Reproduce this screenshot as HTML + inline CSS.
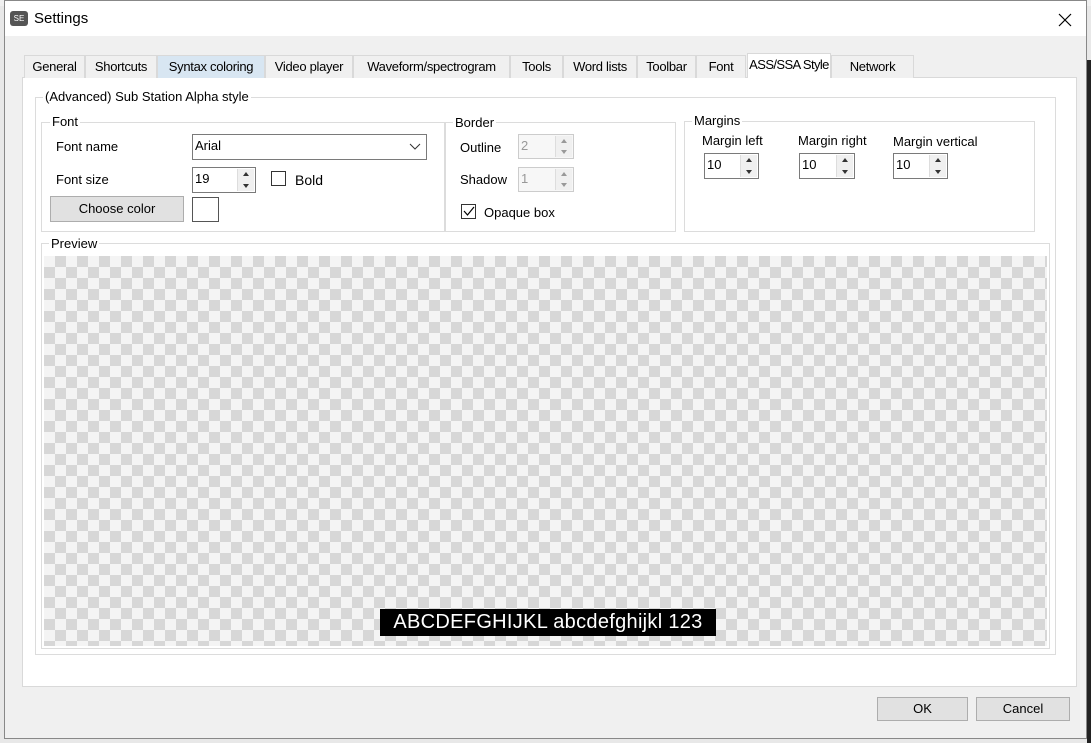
<!DOCTYPE html><html><head><style>
*{box-sizing:border-box;margin:0;padding:0}
body{width:1091px;height:743px;overflow:hidden;background:#e8e8e8;font-family:"Liberation Sans",sans-serif;font-size:13px;color:#000;position:relative}
.a{position:absolute}
.win{left:4px;top:0;width:1083px;height:739px;background:#f0f0f0;border:1px solid #888}
.title{left:5px;top:1px;width:1081px;height:35px;background:#fff}
.tab{position:absolute;top:55px;height:23px;border:1px solid #d9d9d9;border-bottom:none;background:#f0f0f0;padding:3px 0 0 0;text-align:center;font-size:13px;letter-spacing:-0.3px;white-space:nowrap;overflow:visible}
.panel{left:22px;top:77px;width:1055px;height:610px;background:#fff;border:1px solid #d9d9d9}
.gb{position:absolute;border:1px solid #dcdcdc}
.gl{position:absolute;background:#fff;padding:0 2px;font-size:13px}
.inp{position:absolute;border:1px solid #7a7a7a;background:#fff;padding:3px 2px;font-size:13px}
.spin{position:absolute;right:1px;top:1px;width:17px;bottom:1px;border-left:1px solid #ddd;background:#f0f0f0}
.spin:before{content:"";position:absolute;left:5px;top:3px;border:3px solid transparent;border-bottom:4px solid #333;border-top:none}
.spin:after{content:"";position:absolute;left:5px;bottom:3px;border:3px solid transparent;border-top:4px solid #333;border-bottom:none}
.dis{border-color:#ccc;color:#999;background:#f7f7f7}
.dis .spin:before{border-bottom-color:#999}.dis .spin:after{border-top-color:#999}
.btn{position:absolute;border:1px solid #adadad;background:#e1e1e1;text-align:center;font-size:13px}
.chk{position:absolute;border:1px solid #333;width:15px;height:15px;background:#fff}
.checker{left:44px;top:256px;width:1003px;height:390px;background-color:#f4f4f4;background-image:linear-gradient(45deg,#d7d7d7 25%,transparent 25%,transparent 75%,#d7d7d7 75%),linear-gradient(45deg,#d7d7d7 25%,transparent 25%,transparent 75%,#d7d7d7 75%);background-size:22px 22px;background-position:0 0,11px 11px}
</style></head><body>
<div class="a" style="left:0;top:0;width:1091px;height:6px;background:#f0f0f0"></div>
<div class="a" style="left:1087px;top:60px;width:4px;height:683px;background:#222"></div>
<div class="a win"></div>
<div class="a title"></div>
<div class="a" style="left:10px;top:11px;width:18px;height:15px;background:#555;border-radius:3px;color:#fff;font-size:8px;text-align:center;line-height:15px">SE</div>
<div class="a" style="left:34px;top:10px;font-size:15px">Settings</div>
<svg class="a" style="left:1058px;top:13px" width="14" height="14"><path d="M1 1L13 13M13 1L1 13" stroke="#000" stroke-width="1.2"/></svg>

<div class="a panel"></div>
<div class="tab" style="left:24px;width:61px">General</div>
<div class="tab" style="left:85px;width:72px">Shortcuts</div>
<div class="tab" style="left:157px;width:108px;background:#d8e6f2">Syntax coloring</div>
<div class="tab" style="left:265px;width:88px">Video player</div>
<div class="tab" style="left:353px;width:157px">Waveform/spectrogram</div>
<div class="tab" style="left:510px;width:53px">Tools</div>
<div class="tab" style="left:563px;width:74px">Word lists</div>
<div class="tab" style="left:637px;width:59px">Toolbar</div>
<div class="tab" style="left:696px;width:50px">Font</div>
<div class="tab" style="left:747px;top:53px;height:25px;width:84px;background:#fff;border-color:#d9d9d9;letter-spacing:-0.6px">ASS/SSA Style</div>
<div class="tab" style="left:831px;width:83px">Network</div>

<div class="gb" style="left:35px;top:97px;width:1021px;height:558px"></div>
<div class="gl" style="left:43px;top:89px">(Advanced) Sub Station Alpha style</div>

<div class="gb" style="left:41px;top:122px;width:404px;height:110px"></div>
<div class="gl" style="left:50px;top:114px">Font</div>
<div class="a" style="left:56px;top:139px">Font name</div>
<div class="inp" style="left:192px;top:134px;width:235px;height:26px">Arial</div>
<svg class="a" style="left:409px;top:143px" width="12" height="8"><path d="M1 1L6 6L11 1" stroke="#333" fill="none"/></svg>
<div class="a" style="left:56px;top:172px">Font size</div>
<div class="inp" style="left:192px;top:167px;width:64px;height:26px">19<div class="spin"></div></div>
<div class="chk" style="left:271px;top:171px"></div>
<div class="a" style="left:295px;top:172px;font-size:14px">Bold</div>
<div class="btn" style="left:50px;top:196px;width:134px;height:26px;line-height:24px">Choose color</div>
<div class="a" style="left:192px;top:197px;width:27px;height:25px;border:1px solid #555;background:#fff"></div>

<div class="gb" style="left:445px;top:122px;width:231px;height:110px"></div>
<div class="gl" style="left:453px;top:115px">Border</div>
<div class="a" style="left:460px;top:140px">Outline</div>
<div class="inp dis" style="left:518px;top:134px;width:56px;height:25px">2<div class="spin"></div></div>
<div class="a" style="left:460px;top:172px">Shadow</div>
<div class="inp dis" style="left:518px;top:167px;width:56px;height:25px">1<div class="spin"></div></div>
<div class="chk" style="left:461px;top:204px"></div>
<svg class="a" style="left:463px;top:206px" width="12" height="11"><path d="M1 5L4.5 9L11 1" stroke="#000" fill="none" stroke-width="1.2"/></svg>
<div class="a" style="left:484px;top:205px">Opaque box</div>

<div class="gb" style="left:684px;top:121px;width:351px;height:111px"></div>
<div class="gl" style="left:692px;top:113px">Margins</div>
<div class="a" style="left:702px;top:133px">Margin left</div>
<div class="inp" style="left:704px;top:153px;width:55px;height:26px">10<div class="spin"></div></div>
<div class="a" style="left:798px;top:133px">Margin right</div>
<div class="inp" style="left:799px;top:153px;width:56px;height:26px">10<div class="spin"></div></div>
<div class="a" style="left:893px;top:134px">Margin vertical</div>
<div class="inp" style="left:893px;top:153px;width:55px;height:26px">10<div class="spin"></div></div>

<div class="gb" style="left:41px;top:243px;width:1009px;height:406px"></div>
<div class="gl" style="left:49px;top:236px">Preview</div>
<div class="a checker"></div>
<div class="a" style="left:380px;top:609px;width:336px;height:27px;background:#000;color:#fff;font-size:20px;line-height:27px;text-align:center;letter-spacing:0.3px">ABCDEFGHIJKL abcdefghijkl 123</div>

<div class="btn" style="left:877px;top:697px;width:91px;height:24px;line-height:22px">OK</div>
<div class="btn" style="left:976px;top:697px;width:94px;height:24px;line-height:22px">Cancel</div>
</body></html>
